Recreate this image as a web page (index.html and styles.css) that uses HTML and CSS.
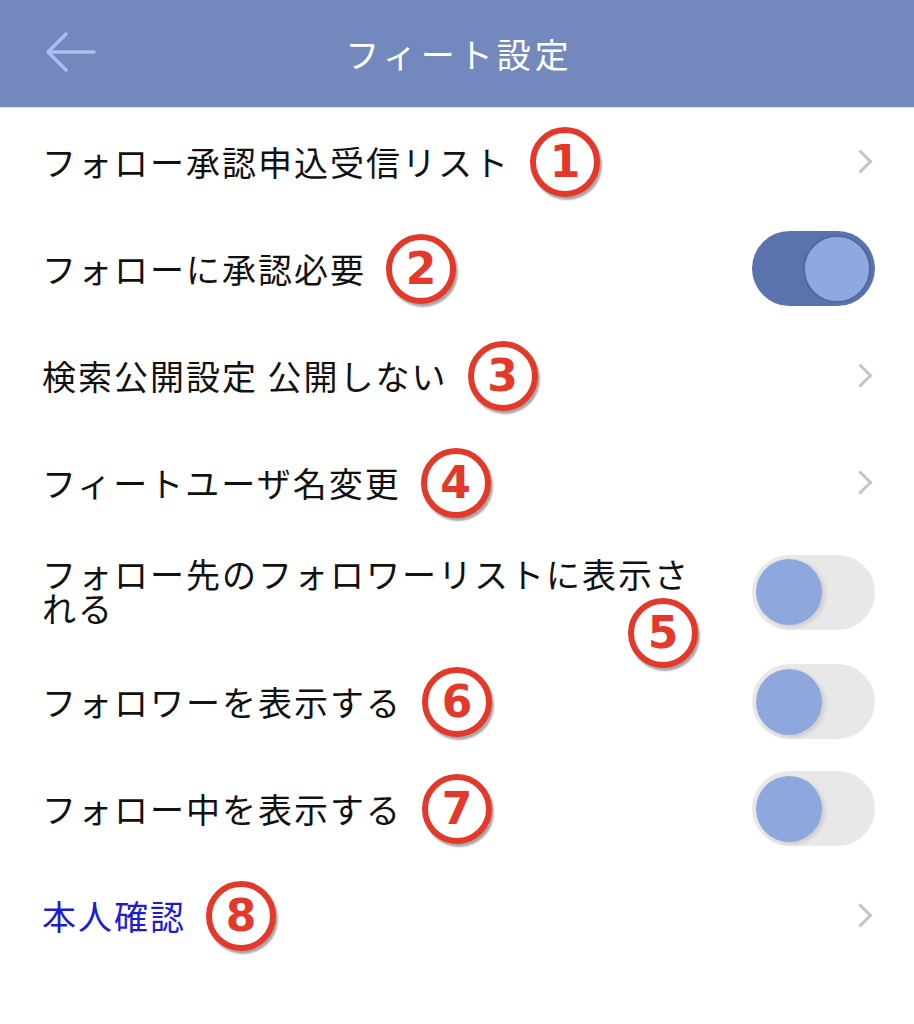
FILE: index.html
```html
<!DOCTYPE html>
<html lang="ja">
<head>
    <meta charset="UTF-8">
    <meta name="viewport" content="width=device-width, initial-scale=1.0">
    <title>フィート設定</title>
    <link rel="stylesheet" href="styles.css">
</head>
<body>
    <header class="topbar">
        <svg class="back" width="52" height="40" viewBox="0 0 52 40">
            <path d="M50 20H4M22 2L4 20l18 18" fill="none" stroke="#a9bff0" stroke-width="3.5" stroke-linecap="round" stroke-linejoin="round"/>
        </svg>
        <h1 class="title">フィート設定</h1>
    </header>

    <ul class="settings">
        <li class="row">
            <span class="label">フォロー承認申込受信リスト</span>
            <span class="badge">1</span>
            <span class="chevron"></span>
        </li>
        <li class="row">
            <span class="label">フォローに承認必要</span>
            <span class="badge">2</span>
            <span class="toggle on"><span class="knob"></span></span>
        </li>
        <li class="row">
            <span class="label">検索公開設定 公開しない</span>
            <span class="badge">3</span>
            <span class="chevron"></span>
        </li>
        <li class="row">
            <span class="label">フィートユーザ名変更</span>
            <span class="badge">4</span>
            <span class="chevron"></span>
        </li>
        <li class="row tall">
            <span class="label wrap">フォロー先のフォロワーリストに表示さ<br>れる</span>
            <span class="badge float">5</span>
            <span class="toggle"><span class="knob"></span></span>
        </li>
        <li class="row">
            <span class="label">フォロワーを表示する</span>
            <span class="badge">6</span>
            <span class="toggle"><span class="knob"></span></span>
        </li>
        <li class="row">
            <span class="label">フォロー中を表示する</span>
            <span class="badge">7</span>
            <span class="toggle"><span class="knob"></span></span>
        </li>
        <li class="row">
            <span class="label link">本人確認</span>
            <span class="badge">8</span>
            <span class="chevron"></span>
        </li>
    </ul>
</body>
</html>
```

FILE: styles.css
```css
body {
    margin: 0;
    background-color: #fff;
    font-family: "Noto Sans CJK JP", "Noto Sans", sans-serif;
    color: #111;
}

.topbar {
    height: 107px;
    background-color: #7389bd;
    display: flex;
    align-items: center;
    justify-content: center;
    position: relative;
    border-bottom: 1px solid #dde3f0;
}

.back {
    position: absolute;
    left: 44px;
    top: 32px;
}

.title {
    margin: 0;
    color: #fff;
    font-size: 34px;
    font-weight: 400;
    letter-spacing: 4px;
    padding-left: 4px;
}

.settings {
    list-style: none;
    margin: 0;
    padding: 0;
}

.row {
    position: relative;
    height: 107px;
    display: flex;
    align-items: center;
    padding: 0 39px 0 42px;
}

.row.tall {
    height: 112px;
}

.label {
    font-size: 34px;
    letter-spacing: 2px;
    white-space: nowrap;
}

.label.wrap {
    line-height: 34px;
    padding-bottom: 2px;
}

.label.link {
    color: #1c1cd6;
}

.badge {
    width: 58px;
    height: 58px;
    margin-left: 20px;
    border: 6px solid #e3382a;
    border-radius: 50%;
    background-color: #fff;
    color: #e3382a;
    font-family: "DejaVu Sans", sans-serif;
    font-weight: bold;
    font-size: 44px;
    line-height: 58px;
    text-align: center;
    box-shadow: 2px 3px 2px rgba(0, 0, 0, 0.35);
    flex-shrink: 0;
}

.badge.float {
    position: absolute;
    left: 628px;
    top: 62px;
    margin: 0;
}

.chevron {
    margin-left: auto;
    margin-right: 6px;
    width: 14px;
    height: 14px;
    border-top: 3.5px solid #c4c4c4;
    border-right: 3.5px solid #c4c4c4;
    transform: rotate(45deg);
}

.toggle {
    margin-left: auto;
    width: 123px;
    height: 75px;
    border-radius: 38px;
    background-color: #e8e8e8;
    display: flex;
    align-items: center;
    padding: 0 4px;
    box-sizing: border-box;
    flex-shrink: 0;
}

.toggle .knob {
    width: 66px;
    height: 66px;
    border-radius: 50%;
    background-color: #8ea8de;
    box-shadow: 3px 2px 4px rgba(0, 0, 0, 0.12);
}

.toggle.on {
    background-color: #5a73ad;
    justify-content: flex-end;
}

.toggle.on .knob {
    width: 64px;
    height: 64px;
    background-color: #8fa8e0;
    border: 2px solid #5168a3;
    box-shadow: none;
}
```
